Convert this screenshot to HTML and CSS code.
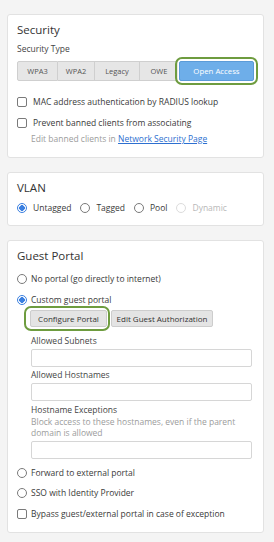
FILE: index.html
```html
<!DOCTYPE html>
<html>
<head>
<meta charset="utf-8">
<link rel="stylesheet" href="styles.css">
</head>
<body>
<div class="page">
  <section class="card card-security">
    <h2 class="title">Security</h2>
    <div class="label">Security Type</div>
    <div class="seg-wrap">
      <div class="seg">
        <span class="seg-btn b-wpa3">WPA3</span>
        <span class="seg-btn b-wpa2">WPA2</span>
        <span class="seg-btn b-legacy">Legacy</span>
        <span class="seg-btn b-owe">OWE</span>
        <span class="seg-ring"><span class="seg-btn active">Open Access</span></span>
      </div>
    </div>
    <div class="opt opt-first"><span class="box"></span><span>MAC address authentication by RADIUS lookup</span></div>
    <div class="opt opt-second"><span class="box"></span><span>Prevent banned clients from associating</span></div>
    <div class="hint hint-edit">Edit banned clients in <a class="link">Network Security Page</a></div>
  </section>

  <section class="card card-vlan">
    <h2 class="title">VLAN</h2>
    <div class="radio-row">
      <span class="opt-inline"><span class="radio checked"></span>Untagged</span>
      <span class="opt-inline"><span class="radio"></span>Tagged</span>
      <span class="opt-inline"><span class="radio"></span>Pool</span>
      <span class="opt-inline disabled"><span class="radio"></span>Dynamic</span>
    </div>
  </section>

  <section class="card card-guest">
    <h2 class="title">Guest Portal</h2>
    <div class="opt r1"><span class="radio"></span><span>No portal (go directly to internet)</span></div>
    <div class="opt r2"><span class="radio checked"></span><span>Custom guest portal</span></div>
    <div class="sub">
      <div class="btn-row">
        <span class="btn-ring"><span class="btn btn-config">Configure Portal</span></span>
        <span class="btn btn-edit">Edit Guest Authorization</span>
      </div>
      <div class="field-label fl1">Allowed Subnets</div>
      <div class="input"></div>
      <div class="field-label fl2">Allowed Hostnames</div>
      <div class="input"></div>
      <div class="field-label fl3">Hostname Exceptions</div>
      <div class="hint help">Block access to these hostnames, even if the parent domain is allowed</div>
      <div class="input in3"></div>
    </div>
    <div class="opt r3"><span class="radio"></span><span>Forward to external portal</span></div>
    <div class="opt r4"><span class="radio"></span><span>SSO with Identity Provider</span></div>
    <div class="opt r5"><span class="box"></span><span>Bypass guest/external portal in case of exception</span></div>
  </section>
</div>
</body>
</html>
```

FILE: styles.css
```css
* { box-sizing: border-box; }
html, body { margin: 0; padding: 0; }
body {
  background: #f4f4f4;
  font-family: "Open Sans", "Liberation Sans", sans-serif;
  color: #3a3a3a;
  font-size: 8.5px;
  width: 274px;
  height: 542px;
  overflow: hidden;
}
.page {
  padding: 14px 10px 0 7px;
  display: flex;
  flex-direction: column;
  gap: 14px;
}
.card {
  background: #fff;
  border: 1px solid #e2e2e2;
  border-radius: 3px;
  padding: 6px 9px 11px 9px;
}
.card-vlan { padding-bottom: 10px; }
.title {
  margin: 0;
  font-size: 11.5px;
  font-weight: 400;
  line-height: 18px;
  color: #333;
}
.label {
  margin-top: 3px;
  line-height: 14px;
  color: #444;
}
.seg-wrap { margin-top: 5px; }
.seg {
  display: flex;
  height: 20px;
  align-items: center;
}
.seg-btn {
  height: 20px;
  display: flex;
  align-items: center;
  justify-content: center;
  background: #e6e6e6;
  border: 1px solid #cfcfcf;
  border-left: none;
  color: #555;
  font-size: 7.5px;
}
.b-wpa3 { width: 42px; border-left: 1px solid #cfcfcf; border-radius: 2px 0 0 2px; }
.b-wpa2 { width: 38px; }
.b-legacy { width: 46px; }
.b-owe { width: 39px; border-right: none; }
.seg-ring {
  display: flex;
  margin: -4px -4px -4px -3px;
  padding: 2px;
  border: 2px solid #6e9c3f;
  border-radius: 7px;
}
.seg-btn.active {
  width: 75px;
  background: #6eaee9;
  border: 1px solid #5b9bd8;
  color: #fff;
  border-radius: 2px;
  font-size: 7.8px;
}
.opt {
  display: flex;
  align-items: center;
  line-height: 14px;
  gap: 6px;
}
.opt-first { margin-top: 14px; }
.opt-second { margin-top: 7px; }
.box {
  width: 10px;
  height: 10px;
  border: 1px solid #7a7a7a;
  border-radius: 2px;
  flex: none;
  background: #fff;
}
.radio {
  width: 10px;
  height: 10px;
  border: 1px solid #7a7a7a;
  border-radius: 50%;
  flex: none;
  background: #fff;
}
.radio.checked {
  border-color: #3a7fe0;
  background: radial-gradient(circle, #3a7fe0 0 2.6px, #fff 3px);
}
.hint { color: #9c9c9c; line-height: 14px; }
.hint-edit { margin-top: 2px; padding-left: 14px; }
.link { color: #2d6fd0; text-decoration: underline; }
.radio-row {
  margin-top: 4px;
  display: flex;
  align-items: center;
  line-height: 14px;
  gap: 9px;
}
.opt-inline { display: flex; align-items: center; gap: 6px; }
.opt-inline.disabled { color: #b8b8b8; }
.opt-inline.disabled .radio { border-color: #dcdcdc; }
.card-guest .opt { gap: 4px; }
.r1 { margin-top: 7px; }
.r2 { margin-top: 7px; }
.sub { padding-left: 14px; }
.btn-row { margin-top: -2px; display: flex; align-items: center; gap: 1px; height: 26px; }
.btn {
  display: inline-flex;
  align-items: center;
  justify-content: center;
  height: 17px;
  background: #e4e4e4;
  border: 1px solid #cdcdcd;
  border-radius: 2px;
  color: #333;
  font-size: 8px;
  white-space: nowrap;
}
.btn-config { width: 77px; }
.btn-edit { width: 102px; }
.btn-ring {
  display: inline-flex;
  margin-left: -7px;
  padding: 2px 1px 2px 4px;
  border: 2px solid #6e9c3f;
  border-radius: 7px;
}
.field-label { line-height: 13px; color: #444; }
.fl1 { margin-top: 3px; }
.fl2 { margin-top: 1px; }
.fl3 { margin-top: 2px; }
.help { line-height: 11px; margin-top: 0; }
.input {
  margin-top: 2px;
  height: 18px;
  border: 1px solid #d6d6d6;
  border-radius: 2px;
  background: #fff;
  width: 221px;
}
.in3 { margin-top: 3px; }
.r3 { margin-top: 7px; }
.r4 { margin-top: 6px; }
.r5 { margin-top: 7px; }
```
